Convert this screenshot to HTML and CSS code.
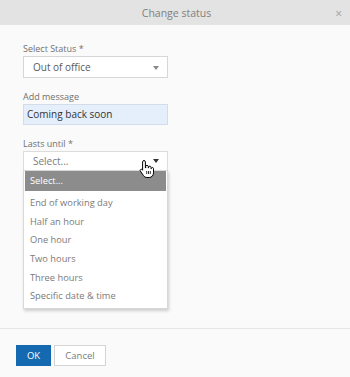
FILE: index.html
```html
<!DOCTYPE html>
<html lang="en">
<head>
    <meta charset="UTF-8">
    <meta name="viewport" content="width=device-width, initial-scale=1.0">
    <title>Change status</title>
    <link rel="stylesheet" href="styles.css">
</head>
<body>
    <div class="dialog">
        <div class="dialog-header">
            <span class="dialog-title">Change status</span>
            <span class="close">&times;</span>
        </div>

        <div class="dialog-body">
            <div class="field">
                <label>Select Status *</label>
                <div class="select">
                    <span>Out of office</span>
                    <span class="caret"></span>
                </div>
            </div>

            <div class="field">
                <label>Add message</label>
                <div class="input">Coming back soon</div>
            </div>

            <div class="field">
                <label>Lasts until *</label>
                <div class="select open">
                    <span class="placeholder">Select...</span>
                    <span class="caret dark"></span>

                    <ul class="options">
                        <li class="selected">Select...</li>
                        <li>End of working day</li>
                        <li>Half an hour</li>
                        <li>One hour</li>
                        <li>Two hours</li>
                        <li>Three hours</li>
                        <li>Specific date &amp; time</li>
                    </ul>

                    <svg class="hand" width="16" height="20" viewBox="0 0 16 20">
                        <path d="M5 1.5c.8 0 1.4.6 1.4 1.4V9h.3V7.6c0-.8.6-1.3 1.3-1.3s1.3.6 1.3 1.3V9h.3V8.3c0-.7.6-1.2 1.2-1.2s1.2.6 1.2 1.2V9.6h.3c0-.6.5-1.1 1.1-1.1s1.1.5 1.1 1.1v4.2c0 2.6-1.8 4.7-4.3 4.7H8c-1.5 0-2.7-.7-3.5-1.9L1.3 12c-.4-.6-.2-1.300.4-1.6.5-.3 1.1-.1 1.5.3l.4.5V2.9c0-.8.6-1.4 1.4-1.4z" fill="#fff" stroke="#000" stroke-width="1" stroke-linejoin="round"/>
                        <path d="M7.7 12v3M9.5 12v3M11.3 12v3" stroke="#000" stroke-width="0.8"/>
                    </svg>
                </div>
            </div>
        </div>

        <div class="dialog-footer">
            <button class="btn primary">OK</button>
            <button class="btn">Cancel</button>
        </div>
    </div>
</body>
</html>
```

FILE: styles.css
```css
* {
    margin: 0;
    padding: 0;
    box-sizing: border-box;
}

body {
    font-family: 'Open Sans', 'Noto Sans', sans-serif;
    background: #fafafa;
    color: #555;
}

.dialog {
    display: flex;
    flex-direction: column;
    width: 350px;
    height: 377px;
    background: #fafafa;
}

.dialog-header {
    position: relative;
    height: 25px;
    background: #e3e3e3;
    display: flex;
    align-items: center;
    justify-content: center;
}

.dialog-title {
    font-size: 10.5px;
    color: #808080;
    margin-left: 3px;
}

.close {
    position: absolute;
    right: 8px;
    top: 5px;
    font-size: 12px;
    color: #a0a0a0;
}

.dialog-body {
    flex: 1;
    padding: 17px 23px 0;
    border-bottom: 1px solid #e6e6e6;
}

.field {
    width: 145px;
    margin-bottom: 12px;
}

.field + .field + .field {
    margin-top: 1px;
}

.field label {
    display: block;
    height: 14px;
    font-size: 9px;
    line-height: 14px;
    color: #707070;
}

.select {
    position: relative;
    height: 22px;
    padding: 0 9px;
    background: #fff;
    border: 1px solid #d6d6d6;
    font-size: 10px;
    line-height: 20px;
    color: #5a5a5a;
}

.select.open {
    height: 20px;
    line-height: 18px;
    border-color: #dcdcdc;
}

.placeholder {
    color: #7a7a7a;
}

.caret {
    position: absolute;
    right: 8px;
    top: 9px;
    border-left: 3px solid transparent;
    border-right: 3px solid transparent;
    border-top: 4px solid #8a8a8a;
}

.caret.dark {
    top: 7px;
    border-top-color: #333;
}

.input {
    height: 21px;
    padding: 0 3px;
    background: #e5eefb;
    border: 1px solid #d3dcea;
    font-size: 10px;
    line-height: 19px;
    color: #333;
}

.options {
    position: absolute;
    left: -1px;
    top: 18px;
    width: 145px;
    list-style: none;
    background: #fff;
    border: 1px solid #d8d8d8;
    box-shadow: 1px 2px 3px rgba(0, 0, 0, 0.18);
    padding: 0 0 2px;
}

.options li {
    height: 18.7px;
    padding: 0 6px;
    font-size: 9.3px;
    line-height: 18.7px;
    color: #7a7a7a;
}

.options li.selected {
    height: 20px;
    line-height: 20px;
    margin: 0 1px 3px;
    padding: 0 5px;
    background: #8c8c8c;
    color: #fff;
}

.hand {
    position: absolute;
    left: 115px;
    top: 7px;
}

.dialog-footer {
    display: flex;
    gap: 3px;
    height: 48px;
    padding: 16px 16px 0;
    background: #fafafa;
}

.btn {
    width: 52px;
    height: 21px;
    font-family: inherit;
    font-size: 9.5px;
    background: #fff;
    border: 1px solid #d4d4d4;
    color: #7a7a7a;
}

.btn.primary {
    width: 35px;
    background: #1569b0;
    border-color: #1569b0;
    color: #fff;
}
```
